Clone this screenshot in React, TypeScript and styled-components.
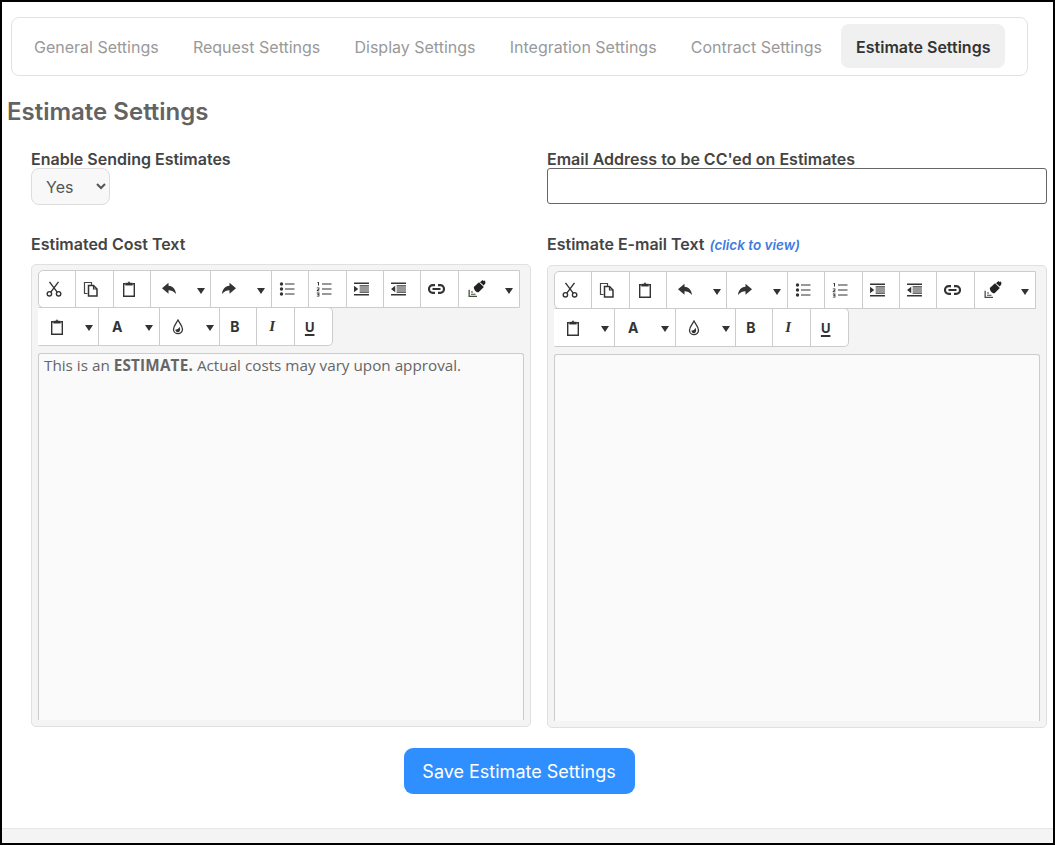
import React from "react";
import styled, { createGlobalStyle } from "styled-components";

const GlobalStyle = createGlobalStyle`
  html, body { margin: 0; padding: 0; background: #fff; }
  * { box-sizing: border-box; }
`;

const dark = "#333";

const BoldA = styled.span`
  font: 700 14px Inter, sans-serif;
  color: #333;
`;

const BoldB = styled(BoldA)``;

const ItalicI = styled.span`
  font: italic 700 15px "Liberation Serif", serif;
  color: #333;
`;

const UnderU = styled(BoldA)`
  font-size: 13px;
  text-decoration: underline;
  text-decoration-thickness: 1.5px;
  text-underline-offset: 2px;
`;

const CutIcon = () => (
  <svg width="16" height="16" viewBox="0 0 16 16" fill="none" stroke={dark} strokeWidth="1.4">
    <circle cx="3.4" cy="12.8" r="2.2" />
    <circle cx="12.6" cy="12.8" r="2.2" />
    <path d="M4.800 11.200 12.500 .8M11.200 11.200 3.500 .8" />
  </svg>
);
const CopyIcon = () => (
  <svg width="16" height="16" viewBox="0 0 16 16" fill="none" stroke={dark} strokeWidth="1.2">
    <path d="M4.500 12.500H1.500V1.500h7v2.500" stroke="#444" />
    <path d="M5.500 4.500h5l3.500 3.500v7H5.500z" strokeWidth="1.5" />
    <path d="M10.500 4.500V8H14" />
  </svg>
);
const PasteIcon = () => (
  <svg width="16" height="16" viewBox="0 0 16 16" fill="none" stroke={dark} strokeWidth="1.4">
    <path d="M4.500 2.800H2.700v12.500h10.600V2.800h-1.800" />
    <path d="M4.500 4.200V2h2.300L8 .6 9.200 2h2.300v2.200z" fill={dark} strokeWidth="0.4" />
  </svg>
);
const UndoIcon = () => (
  <svg width="16" height="16" viewBox="0 0 16 16" fill={dark}>
    <path d="M7.500 1.800 1 7.300 7.500 12.800V9.300c2.800 0 5 .9 7.500 3.700-.4-4.600-3-7.700-7.500-8.200z" />
  </svg>
);
const RedoIcon = () => (
  <svg width="16" height="16" viewBox="0 0 16 16" fill={dark}>
    <path d="M8.500 1.800 15 7.300 8.500 12.800V9.300c-2.800 0-5 .9-7.500 3.700.4-4.600 3-7.700 7.500-8.200z" />
  </svg>
);
const BulletIcon = () => (
  <svg width="16" height="16" viewBox="0 0 16 16" fill={dark}>
    <circle cx="2.500" cy="3" r="1.700" />
    <circle cx="2.500" cy="8" r="1.700" />
    <circle cx="2.500" cy="13" r="1.700" />
    <path d="M6 2.500h9.500v1.100H6zM6 7.500h9.500v1.100H6zM6 12.500h9.500v1.100H6z" />
  </svg>
);
const NumberIcon = () => (
  <svg width="16" height="16" viewBox="0 0 16 16" fill={dark}>
    <path d="M1.500 1h1.500v3.600H2V2h-.5zM.8 6.400h2.600v2L2 9.400h1.400v.8H.8V9l1.700-1.100v-.7H.8zM.8 11.600h2.600v4H.8v-.8h1.700v-.9H1.200v-.7h1.300v-.8H.8z" />
    <path d="M6 2.500h9.500v1.100H6zM6 7.500h9.500v1.100H6zM6 12.500h9.500v1.100H6z" />
  </svg>
);
const IndentIcon = () => (
  <svg width="15" height="14" viewBox="0 0 16 15" fill={dark}>
    <path d="M0 .5h16v1.600H0zM0 12.900h16v1.600H0zM6 3.500h10v1.200H6zM6 5.800h10v1.200H6zM6 8h10v1.200H6zM6 10.300h10v1.200H6zM0 4l4.500 3.500L0 11z" />
  </svg>
);
const OutdentIcon = () => (
  <svg width="15" height="14" viewBox="0 0 16 15" fill={dark}>
    <path d="M0 .5h16v1.600H0zM0 12.900h16v1.600H0zM6 3.500h10v1.200H6zM6 5.800h10v1.200H6zM6 8h10v1.200H6zM6 10.300h10v1.200H6zM4.500 4 0 7.500 4.500 11z" />
  </svg>
);
const LinkIcon = () => (
  <svg width="17" height="16" viewBox="0 0 17 16" fill="none" stroke={dark} strokeWidth="2.200">
    <path d="M7 4.200H4.800a3.800 3.800 0 0 0 0 7.600H7M10 4.200h2.200a3.800 3.800 0 0 1 0 7.600H10M4.500 8h8" />
  </svg>
);
const PainterIcon = () => (
  <svg width="18" height="18" viewBox="0 0 18 18" fill="#222">
    <path d="M5.800 7 11 2.300 15.800 7l-5.200 5.300C8 12.300 5.800 10 5.800 7z" />
    <path d="M12 2.200 14.500 0l1 1 1.500-.5.500 2.500L15.800 5.600z" />
    <path d="M.5 9.800h1.300v6H9v1.300H.5z" fill="#44523a" />
    <path d="M3 11.500h2v1H3zM3 13.700h4.500v1H3z" fill="#444" />
  </svg>
);
const DropIcon = () => (
  <svg width="16" height="16" viewBox="0 0 16 16" fill="none" stroke={dark} strokeWidth="1.3">
    <path d="M8 1C6.300 4.300 3.500 6.800 3.500 10.200a4.500 4.500 0 0 0 9 0C12.500 6.800 9.700 4.300 8 1z" />
    <path d="M8 13.200c-1.600 0-2.600-1.200-2.600-2.700C7 11 8.800 9.800 9.300 7.800c1.400 2 1 5.400-1.300 5.400z" fill={dark} stroke="none" />
  </svg>
);

type Tool = { icon: React.ReactNode; caret?: boolean };

const firstRow: Tool[] = [
  { icon: <CutIcon /> },
  { icon: <CopyIcon /> },
  { icon: <PasteIcon /> },
  { icon: <UndoIcon />, caret: true },
  { icon: <RedoIcon />, caret: true },
  { icon: <BulletIcon /> },
  { icon: <NumberIcon /> },
  { icon: <IndentIcon /> },
  { icon: <OutdentIcon /> },
  { icon: <LinkIcon /> },
  { icon: <PainterIcon />, caret: true },
];

const secondRow: Tool[] = [
  { icon: <PasteIcon />, caret: true },
  { icon: <BoldA>A</BoldA>, caret: true },
  { icon: <DropIcon />, caret: true },
  { icon: <BoldB>B</BoldB> },
  { icon: <ItalicI>I</ItalicI> },
  { icon: <UnderU>U</UnderU> },
];

const tabs = [
  "General Settings",
  "Request Settings",
  "Display Settings",
  "Integration Settings",
  "Contract Settings",
  "Estimate Settings",
];

function Toolbar() {
  return (
    <ToolbarWrap>
      <ToolRow>
        {firstRow.map((t, i) => (
          <ToolButton key={i} $wide={t.caret}>
            <IconSlot>{t.icon}</IconSlot>
            {t.caret && <Caret />}
          </ToolButton>
        ))}
      </ToolRow>
      <ToolRow $second>
        {secondRow.map((t, i) => (
          <ToolButton key={i} $wide={t.caret}>
            <IconSlot>{t.icon}</IconSlot>
            {t.caret && <Caret />}
          </ToolButton>
        ))}
      </ToolRow>
    </ToolbarWrap>
  );
}

export default function App() {
  return (
    <Frame>
      <GlobalStyle />
      <Content>
        <TabBar>
          {tabs.map((t) => (
            <Tab key={t} $active={t === "Estimate Settings"}>
              {t}
            </Tab>
          ))}
        </TabBar>
        <Title>Estimate Settings</Title>
        <FormGrid>
          <Field>
            <Label>Enable Sending Estimates</Label>
            <Select defaultValue="Yes">
              <option>Yes</option>
              <option>No</option>
            </Select>
          </Field>
          <Field>
            <Label>Email Address to be CC'ed on Estimates</Label>
            <TextInput type="text" />
          </Field>
          <Field>
            <Label>Estimated Cost Text</Label>
            <Editor>
              <Toolbar />
              <EditArea>
                This is an <b>ESTIMATE.</b> Actual costs may vary upon approval.
              </EditArea>
            </Editor>
          </Field>
          <Field>
            <Label>
              Estimate E-mail Text <ClickLink>(click to view)</ClickLink>
            </Label>
            <Editor>
              <Toolbar />
              <EditArea />
            </Editor>
          </Field>
        </FormGrid>
        <SaveRow>
          <SaveButton>Save Estimate Settings</SaveButton>
        </SaveRow>
      </Content>
      <Footer />
    </Frame>
  );
}

const Frame = styled.div`
  width: 1055px;
  height: 845px;
  border: 2px solid #000;
  display: flex;
  flex-direction: column;
  font-family: Inter, "Liberation Sans", sans-serif;
  overflow: hidden;
  background: #fff;
`;

const Content = styled.main`
  flex: 1;
  padding: 15px 6px 0 5px;
`;

const TabBar = styled.nav`
  margin: 0 19px 0 4px;
  height: 59px;
  border: 1px solid #e2e2e2;
  border-radius: 8px;
  display: flex;
  align-items: flex-start;
  gap: 4.2px;
  padding: 6px 0 0 7px;
`;

const Tab = styled.div<{ $active?: boolean }>`
  height: 44px;
  padding: 1px 15px 0;
  border-radius: 8px;
  display: flex;
  align-items: center;
  font-size: 16px;
  font-weight: ${(p) => (p.$active ? 600 : 400)};
  color: ${(p) => (p.$active ? "#333" : "#999")};
  background: ${(p) => (p.$active ? "#f0f0f0" : "transparent")};
`;

const Title = styled.h2`
  margin: 21px 0 0;
  font-size: 24px;
  line-height: 30px;
  font-weight: 600;
  color: #636363;
`;

const FormGrid = styled.div`
  display: grid;
  grid-template-columns: 500px 500px;
  column-gap: 16px;
  row-gap: 29px;
  margin: 22px 0 0 24px;
`;

const Field = styled.div`
  display: flex;
  flex-direction: column;
  align-items: flex-start;
`;

const Label = styled.label`
  font-size: 16px;
  line-height: 20px;
  font-weight: 600;
  color: #444;
`;

const ClickLink = styled.span`
  font-size: 13.5px;
  font-style: italic;
  font-weight: 600;
  color: #3f7be0;
  margin-left: 1px;
`;

const Select = styled.select`
  width: 79px;
  height: 37px;
  margin-top: -1px;
  padding: 0 0 0 10px;
  border: 1px solid #ddd;
  border-radius: 8px;
  background: #f8f8f8;
  font-family: inherit;
  font-size: 16px;
  color: #555;
`;

const TextInput = styled.input`
  width: 100%;
  height: 36px;
  margin-top: -1px;
  border: 1px solid #666;
  border-radius: 3px;
  background: #fff;
`;

const Editor = styled.div`
  width: 500px;
  height: 463px;
  margin-top: 10px;
  padding: 5px 6px 6px 6px;
  border: 1px solid #e0e0e0;
  border-radius: 5px;
  background: #f4f4f4;
  display: flex;
  flex-direction: column;
`;

const ToolbarWrap = styled.div`
  display: flex;
  flex-direction: column;
`;

const ToolRow = styled.div<{ $second?: boolean }>`
  align-self: flex-start;
  display: flex;
  height: ${(p) => (p.$second ? "39px" : "38px")};
  margin-top: ${(p) => (p.$second ? "-1px" : 0)};
  background: #fff;
  border: 1px solid #ccc;
  border-left-color: ${(p) => (p.$second ? "transparent" : "#ccc")};
  border-radius: ${(p) => (p.$second ? "0 5px 5px 0" : "5px 0 0 5px")};
`;

const ToolButton = styled.div<{ $wide?: boolean }>`
  width: ${(p) => (p.$wide ? "60.3px" : "37.4px")};
  display: flex;
  align-items: center;
  padding-left: ${(p) => (p.$wide ? "10px" : "7px")};
  border-right: 1px solid #ccc;

  &:last-child {
    border-right: 0;
  }

  svg {
    flex-shrink: 0;
  }
`;

const IconSlot = styled.span`
  width: 16px;
  height: 18px;
  display: flex;
  align-items: center;
  justify-content: center;
`;

const Caret = styled.span`
  margin: 3px 0 0 20px;
  border-left: 4px solid transparent;
  border-right: 4px solid transparent;
  border-top: 6px solid #333;
`;

const EditArea = styled.div`
  flex: 1;
  margin-top: 7px;
  padding: 1px 5px;
  border: 1px solid #ccc;
  border-bottom: 0;
  border-radius: 3px 3px 0 0;
  background: #fafafa;
  font-family: "Open Sans", sans-serif;
  font-size: 15.25px;
  line-height: 21px;
  color: #666;

  b {
    letter-spacing: 0.2px;
  }
`;

const SaveRow = styled.div`
  display: flex;
  justify-content: center;
  margin-top: 20px;
  padding-right: 16px;
`;

const SaveButton = styled.button`
  width: 231px;
  height: 46px;
  border: 0;
  border-radius: 9px;
  background: #2f8fff;
  color: #fff;
  font-family: inherit;
  font-size: 18px;
  font-weight: 400;
`;

const Footer = styled.footer`
  height: 15px;
  background: #f4f4f4;
  border-top: 1px solid #e6e6e6;
`;
